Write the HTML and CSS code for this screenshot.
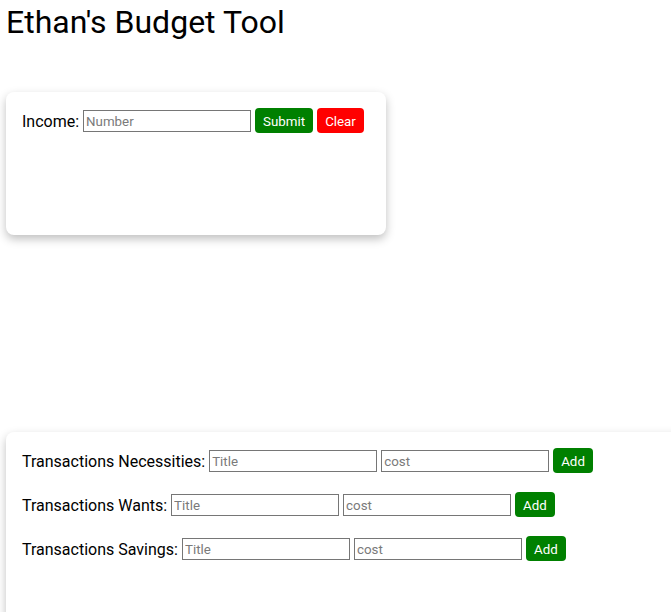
FILE: index.html
```html
<!DOCTYPE html>
<html>
<head>
<meta charset="utf-8">
<link rel="stylesheet" href="styles.css">
</head>
<body>
<h1 class="title">Ethan's Budget Tool</h1>
<div class="card income-card">
  <div class="row">
    <label class="label">Income:</label>
    <input class="field" type="text" placeholder="Number">
    <button class="btn btn-green">Submit</button>
    <button class="btn btn-red">Clear</button>
  </div>
</div>
<div class="card tx-card">
  <div class="row">
    <label class="label">Transactions Necessities:</label>
    <input class="field" type="text" placeholder="Title">
    <input class="field" type="text" placeholder="cost">
    <button class="btn btn-green">Add</button>
  </div>
  <div class="row">
    <label class="label">Transactions Wants:</label>
    <input class="field" type="text" placeholder="Title">
    <input class="field" type="text" placeholder="cost">
    <button class="btn btn-green">Add</button>
  </div>
  <div class="row">
    <label class="label">Transactions Savings:</label>
    <input class="field" type="text" placeholder="Title">
    <input class="field" type="text" placeholder="cost">
    <button class="btn btn-green">Add</button>
  </div>
</div>
</body>
</html>
```
FILE: styles.css
```css
html, body {
  margin: 0;
  padding: 0;
  overflow: hidden;
  background: #fff;
  font-family: Roboto, "Liberation Sans", sans-serif;
  color: #000;
}
.title {
  font-size: 32px;
  font-weight: 400;
  margin: 0;
  padding: 3px 6px 0;
  line-height: 38px;
}
.card {
  background: #fff;
  border-radius: 8px;
  box-shadow: 0 4px 10px rgba(0,0,0,0.25);
  margin-left: 6px;
  padding: 16px;
  box-sizing: border-box;
}
.income-card {
  margin-top: 51px;
  width: 380px;
  height: 143px;
}
.tx-card {
  margin-top: 197px;
  width: 720px;
  height: 260px;
  display: flex;
  flex-direction: column;
  gap: 19px;
}
.row {
  display: flex;
  align-items: center;
  gap: 4px;
  height: 25px;
}
.label {
  font-size: 16px;
  padding-top: 1px;
}
.field {
  width: 168px;
  height: 22px;
  box-sizing: border-box;
  border: 1px solid #767676;
  padding: 2px 2px 0;
  margin: 0;
  font-family: Roboto, "Liberation Sans", sans-serif;
  font-size: 13.33px;
  border-radius: 0;
  outline: none;
}
.field::placeholder {
  color: #7a7a7a;
}
.btn {
  height: 25px;
  border: none;
  border-radius: 4px;
  color: #fff;
  font-family: Roboto, "Liberation Sans", sans-serif;
  font-size: 13.33px;
  padding: 1px 8px 0;
  margin: 0;
}
.btn-green { background: #008000; }
.btn-red { background: #ff0000; }
```
